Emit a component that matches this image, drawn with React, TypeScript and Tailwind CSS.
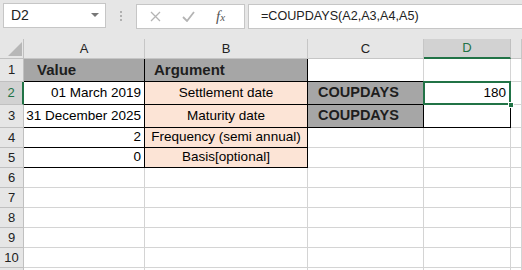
import React from 'react';

type Cell = { text?: string; cls?: string; box?: string };

const GRID = 'border-r border-b border-[#d4d4d4]';
const BLACK = 'border-r border-b border-black';

const rows: { h: string; cells: Cell[] }[] = [
  {
    h: 'h-[23px]',
    cells: [
      { text: 'Value', box: `${BLACK} bg-[#a6a6a6] justify-start pl-[13px]`, cls: 'font-bold text-[15px] text-[#1e1e1e]' },
      { text: 'Argument', box: `${BLACK} bg-[#a6a6a6] justify-start pl-[9px]`, cls: 'font-bold text-[15px] text-[#1e1e1e]' },
      { box: 'border-r border-[#d4d4d4] border-b border-b-black' },
      { box: 'border-r border-[#d4d4d4] border-b border-b-black' },
      { box: GRID },
    ],
  },
  {
    h: 'h-[23px]',
    cells: [
      { text: '01 March 2019', box: `${BLACK} justify-end pr-[3px]` },
      { text: 'Settlement date', box: `${BLACK} bg-[#fce4d6] justify-center` },
      { text: 'COUPDAYS', box: `${BLACK} bg-[#a6a6a6] justify-start pl-[10px]`, cls: 'font-bold text-[14.5px] text-[#1e1e1e]' },
      { text: '180', box: `${BLACK} justify-end pr-[4px] relative` },
      { box: GRID },
    ],
  },
  {
    h: 'h-[23px]',
    cells: [
      { text: '31 December 2025', box: `${BLACK} justify-end pr-[3px]` },
      { text: 'Maturity date', box: `${BLACK} bg-[#fce4d6] justify-center` },
      { text: 'COUPDAYS', box: `${BLACK} bg-[#a6a6a6] justify-start pl-[10px]`, cls: 'font-bold text-[14.5px] text-[#1e1e1e]' },
      { box: BLACK },
      { box: GRID },
    ],
  },
  {
    h: 'h-[20px]',
    cells: [
      { text: '2', box: `${BLACK} justify-end pr-[3px]` },
      { text: 'Frequency (semi annual)', box: `${BLACK} bg-[#fce4d6] justify-center` },
      { box: GRID },
      { box: GRID },
      { box: GRID },
    ],
  },
  {
    h: 'h-[20px]',
    cells: [
      { text: '0', box: `${BLACK} justify-end pr-[3px]` },
      { text: 'Basis[optional]', box: `${BLACK} bg-[#fce4d6] justify-center` },
      { box: GRID },
      { box: GRID },
      { box: GRID },
    ],
  },
];

for (let i = 0; i < 6; i++) {
  rows.push({ h: 'h-[20px]', cells: [{ box: GRID }, { box: GRID }, { box: GRID }, { box: GRID }, { box: GRID }] });
}

const letters = ['A', 'B', 'C', 'D', ''];

export default function App() {
  return (
    <div className="w-[522px] h-[270px] overflow-hidden bg-white font-['Liberation_Sans',sans-serif] text-[13.5px] text-black">
      {/* formula bar */}
      <div className="h-[39px] bg-[#e6e6e6] pt-[3px] flex items-start">
        <div className="ml-[3px] w-[103px] h-[25px] bg-white border border-[#c6c6c6] flex items-center justify-between pl-[7px] pr-[6px]">
          <span className="text-[14px] text-[#222]">D2</span>
          <svg width="8" height="5" viewBox="0 0 8 5"><path d="M0 0h8L4 4z" fill="#777" /></svg>
        </div>
        <div className="w-[30px] h-[25px] flex flex-col items-center justify-center gap-[2px]">
          <span className="w-[2px] h-[2px] bg-[#b0b0b0]" />
          <span className="w-[2px] h-[2px] bg-[#b0b0b0]" />
          <span className="w-[2px] h-[2px] bg-[#b0b0b0]" />
        </div>
        <div className="w-[109px] h-[25px] mt-[1px] bg-white border border-[#c6c6c6] flex items-center pl-[13px] gap-[21px]">
          <svg width="11" height="11" viewBox="0 0 11 11"><path d="M1 1l9 9M10 1l-9 9" stroke="#b4b4b4" strokeWidth="1.3" /></svg>
          <svg width="13" height="11" viewBox="0 0 13 11"><path d="M1 6l4 4 7-9" fill="none" stroke="#b4b4b4" strokeWidth="1.8" /></svg>
          <span className="font-['Liberation_Serif',serif] italic text-[15px] text-[#555] leading-none">
            f<span className="text-[11px]">x</span>
          </span>
        </div>
        <div className="ml-[3px] flex-1 h-[25px] mt-[1px] bg-white border border-[#c6c6c6] border-r-0 flex items-center pl-[12px]">
          <span className="text-[12.6px] text-[#222]">=COUPDAYS(A2,A3,A4,A5)</span>
        </div>
      </div>

      <div className="grid grid-cols-[24px_121px_163px_116px_87px_1fr]">
        {/* column headers */}
        <div className="h-[20px] bg-[#e6e6e6] border-r border-b border-[#c0c0c0] relative">
          <svg className="absolute right-[1px] bottom-[2px]" width="14" height="14" viewBox="0 0 14 14"><path d="M14 0V14H0z" fill="#b7b7b7" /></svg>
        </div>
        {letters.map((l, i) =>
          l === 'D' ? (
            <div key={l} className="h-[20px] bg-[#d2d2d2] border-r border-[#c0c0c0] border-b-2 border-b-[#217346] flex items-center justify-center text-[#217346] text-[13px]">
              {l}
            </div>
          ) : (
            <div key={i} className="h-[20px] bg-[#e6e6e6] border-r border-b border-[#c6c6c6] flex items-center justify-center text-[#222] text-[13px]">
              {l}
            </div>
          )
        )}

        {rows.map((r, ri) => (
          <React.Fragment key={ri}>
            {ri === 1 ? (
              <div className={`${r.h} bg-[#d2d2d2] border-r-2 border-r-[#217346] border-b border-b-[#c0c0c0] flex items-center justify-center text-[#217346] text-[13px]`}>
                {ri + 1}
              </div>
            ) : (
              <div className={`${r.h} bg-[#e6e6e6] border-r border-b border-[#c0c0c0] flex items-center justify-center text-[#222] text-[13px]`}>
                {ri < 10 ? ri + 1 : ''}
              </div>
            )}
            {r.cells.map((c, ci) => (
              <div key={ci} className={`${r.h} flex items-center whitespace-nowrap overflow-visible ${c.box}`}>
                {c.text && <span className={c.cls ?? ''}>{c.text}</span>}
                {ri === 1 && ci === 3 && (
                  <>
                    <div className="absolute left-[-1px] top-[-1px] right-[-1px] bottom-[-1px] border-2 border-[#217346] pointer-events-none" />
                    <div className="absolute right-[-4px] bottom-[-4px] w-[6px] h-[6px] bg-[#217346] border border-white" />
                  </>
                )}
              </div>
            ))}
          </React.Fragment>
        ))}
      </div>
    </div>
  );
}
